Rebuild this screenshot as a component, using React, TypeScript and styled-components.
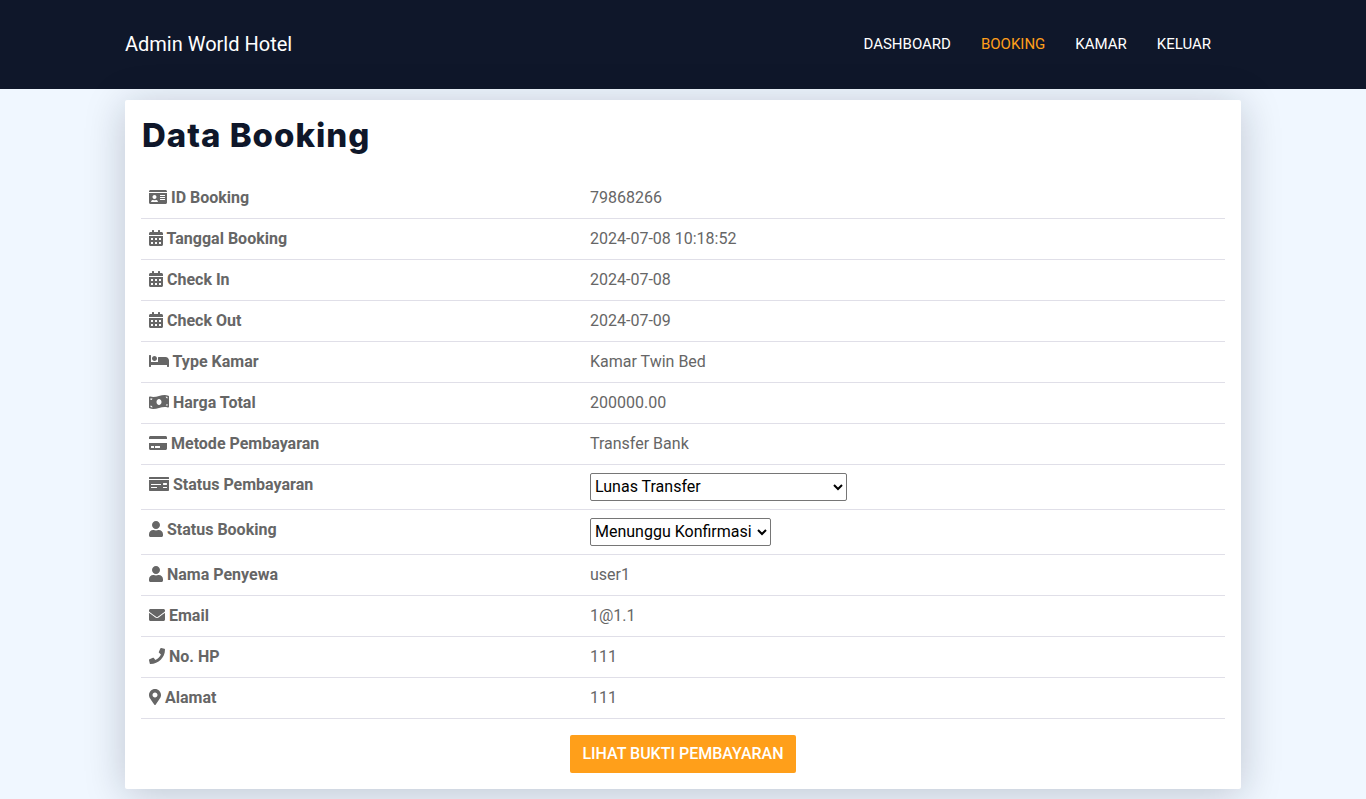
import React from 'react';
import styled, { createGlobalStyle } from 'styled-components';
import { IconType } from 'react-icons';
import {
  FaIdCard,
  FaCalendarAlt,
  FaBed,
  FaMoneyBillWave,
  FaCreditCard,
  FaMoneyCheck,
  FaUser,
  FaEnvelope,
  FaPhone,
  FaMapMarkerAlt,
} from 'react-icons/fa';

const GlobalStyle = createGlobalStyle`
  * {
    box-sizing: border-box;
  }

  html, body {
    margin: 0;
    padding: 0;
    height: 799px;
    overflow: hidden;
    background: #f0f7ff;
    font-family: Roboto, "Liberation Sans", sans-serif;
  }
`;

const Header = styled.header`
  height: 89px;
  background: #0f172a;
  padding: 0 125px 2px;
  display: flex;
  align-items: center;
  justify-content: space-between;
`;

const Brand = styled.a`
  color: #fff;
  font-size: 20px;
  font-weight: 400;
`;

const Nav = styled.nav`
  display: flex;
  gap: 30px;
  padding-right: 30px;
`;

const NavLink = styled.a<{ $active?: boolean }>`
  color: ${(p) => (p.$active ? '#ff9f1a' : '#fff')};
  font-size: 15px;
  font-weight: 400;
  text-transform: uppercase;
`;

const Card = styled.main`
  width: 1116px;
  height: 689px;
  margin: 11px auto 0;
  background: #fff;
  padding: 0 16px 16px;
  border-radius: 2px;
  box-shadow: 0 5px 40px rgba(15, 23, 42, 0.22);
`;

const Title = styled.h1`
  margin: 0;
  height: 78px;
  padding: 14px 0 0 1px;
  color: #0f172a;
  font-family: Inter, "Liberation Sans", sans-serif;
  font-size: 33px;
  line-height: 42px;
  font-weight: 800;
  letter-spacing: 1px;
`;

const Table = styled.table`
  width: 100%;
  border-collapse: collapse;
  color: #666;
  font-size: 16px;
  line-height: 24px;
`;

const Row = styled.tr`
  border-bottom: 1px solid #e0dfe8;
`;

// react-icons sets width="1em", so the real glyph width has to be given here
const Label = styled.th<{ $iconWidth: number }>`
  width: 441px;
  padding: 8px;
  text-align: left;
  font-weight: 700;
  vertical-align: top;

  svg {
    width: ${(p) => p.$iconWidth}px;
    height: 16px;
    vertical-align: -2px;
  }
`;

const Value = styled.td`
  padding: 8px;
  font-weight: 400;
`;

const Select = styled.select<{ $width: number }>`
  display: block;
  width: ${(p) => p.$width}px;
  height: 28px;
  padding: 0 0 2px;
  background: #fff;
  border: 1px solid #767676;
  border-radius: 2px;
  color: #000;
  font-family: Roboto, sans-serif;
  font-size: 16px;
`;

const Actions = styled.div`
  display: flex;
  justify-content: center;
  margin-top: 16px;
`;

const Button = styled.button`
  height: 38px;
  padding: 0 12.5px 2px;
  background: #ff9f1a;
  border: none;
  border-radius: 2px;
  color: #fff;
  font-family: Roboto, sans-serif;
  font-size: 16px;
  font-weight: 500;
  text-transform: uppercase;
`;

type Info = { icon: IconType; iconWidth: number; label: string; value: string };

const rows: Info[] = [
  { icon: FaIdCard, iconWidth: 18, label: 'ID Booking', value: '79868266' },
  { icon: FaCalendarAlt, iconWidth: 14, label: 'Tanggal Booking', value: '2024-07-08 10:18:52' },
  { icon: FaCalendarAlt, iconWidth: 14, label: 'Check In', value: '2024-07-08' },
  { icon: FaCalendarAlt, iconWidth: 14, label: 'Check Out', value: '2024-07-09' },
  { icon: FaBed, iconWidth: 20, label: 'Type Kamar', value: 'Kamar Twin Bed' },
  { icon: FaMoneyBillWave, iconWidth: 20, label: 'Harga Total', value: '200000.00' },
  { icon: FaCreditCard, iconWidth: 18, label: 'Metode Pembayaran', value: 'Transfer Bank' },
];

const contactRows: Info[] = [
  { icon: FaUser, iconWidth: 14, label: 'Nama Penyewa', value: 'user1' },
  { icon: FaEnvelope, iconWidth: 16, label: 'Email', value: '1@1.1' },
  { icon: FaPhone, iconWidth: 16, label: 'No. HP', value: '111' },
  { icon: FaMapMarkerAlt, iconWidth: 12, label: 'Alamat', value: '111' },
];

const App: React.FC = () => {
  const renderRow = (r: Info) => (
    <Row key={r.label}>
      <Label $iconWidth={r.iconWidth}>
        <r.icon /> {r.label}
      </Label>
      <Value>{r.value}</Value>
    </Row>
  );

  return (
    <>
      <GlobalStyle />
      <Header>
        <Brand>Admin World Hotel</Brand>
        <Nav>
          <NavLink>Dashboard</NavLink>
          <NavLink $active>Booking</NavLink>
          <NavLink>Kamar</NavLink>
          <NavLink>Keluar</NavLink>
        </Nav>
      </Header>
      <Card>
        <Title>Data Booking</Title>
        <Table>
          <tbody>
            {rows.map(renderRow)}
            <Row>
              <Label $iconWidth={20}>
                <FaMoneyCheck /> Status Pembayaran
              </Label>
              <Value>
                <Select $width={257} defaultValue="Lunas Transfer">
                  <option>Lunas Transfer</option>
                  <option>Belum Lunas</option>
                </Select>
              </Value>
            </Row>
            <Row>
              <Label $iconWidth={14}>
                <FaUser /> Status Booking
              </Label>
              <Value>
                <Select $width={181} defaultValue="Menunggu Konfirmasi">
                  <option>Menunggu Konfirmasi</option>
                  <option>Dikonfirmasi</option>
                </Select>
              </Value>
            </Row>
            {contactRows.map(renderRow)}
          </tbody>
        </Table>
        <Actions>
          <Button>Lihat Bukti Pembayaran</Button>
        </Actions>
      </Card>
    </>
  );
};

export default App;
